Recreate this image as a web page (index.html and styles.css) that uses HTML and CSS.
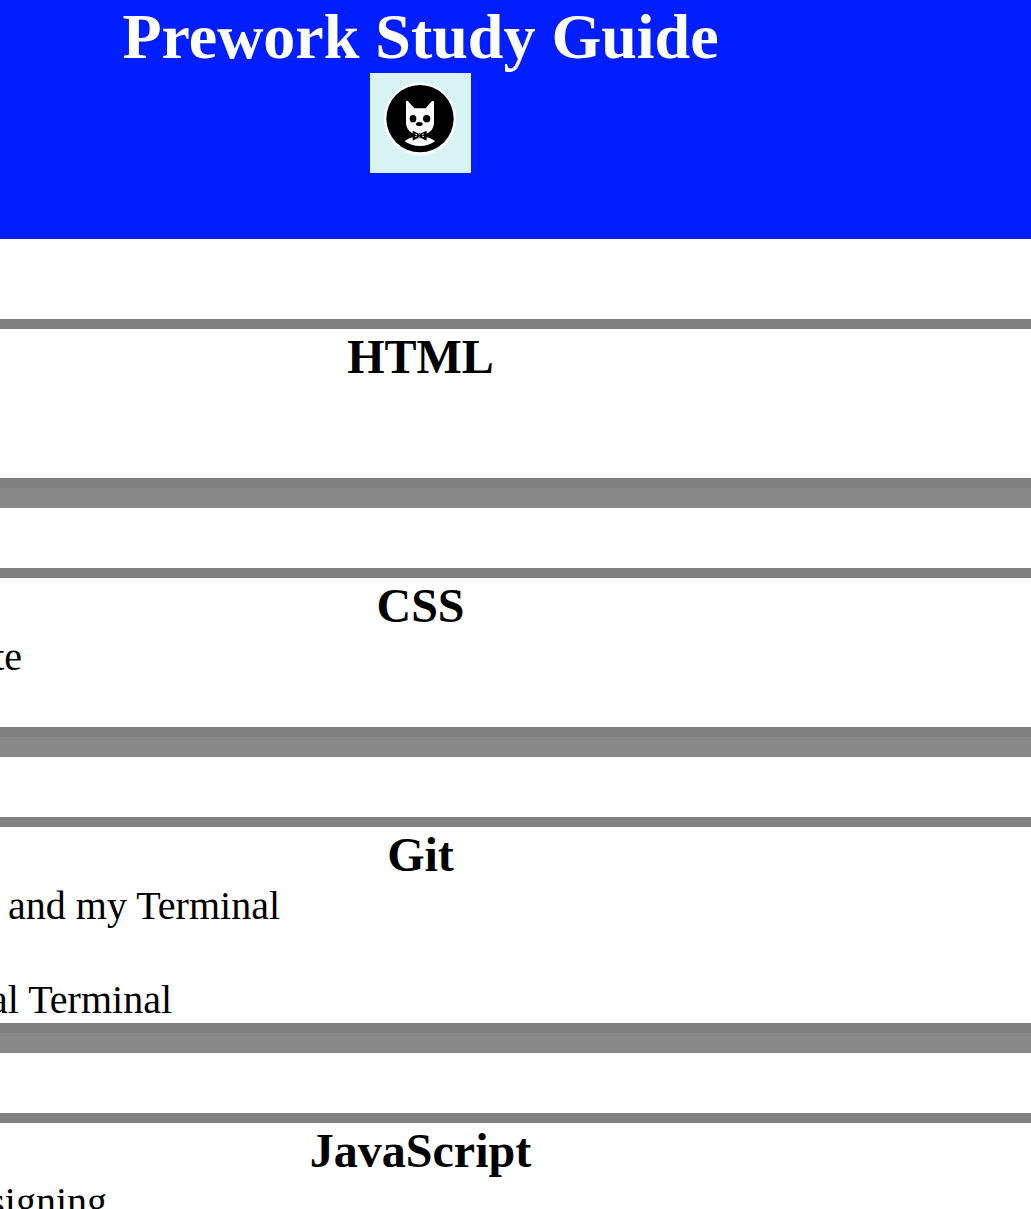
FILE: index.html
```html
<!DOCTYPE html>
<html lang="en">
<head>
  <meta charset="utf-8">
  <title>Prework Study Guide</title>
  <link rel="stylesheet" href="styles.css">
</head>
<body>
  <header class="header">
    <h1 class="title">Prework Study Guide</h1>
    <svg class="logo" viewBox="30 24 303 300" role="img" aria-label="Cat wearing a bow tie">
      <rect x="30" y="24" width="303" height="300" fill="#d7f3f3"/>
      <ellipse cx="180" cy="163" rx="109" ry="111" fill="#e8fbfa"/>
      <circle cx="180" cy="161" r="107" fill="#fff"/>
      <circle cx="180" cy="161" r="101" fill="#000"/>
      <path d="M138 108 Q142 106 146 111 L163 130 H197 L213 111 Q219 106 222 110 V174 Q221 195 203 205 L178 208 L157 205 Q139 195 138 174 Z" fill="#fff"/>
      <path d="M134 229 Q145 218 164 216 H195 Q214 218 225 229 Q206 243 180 243 Q153 243 134 229 Z" fill="#fff"/>
      <ellipse cx="159" cy="161" rx="10" ry="11" fill="#000"/>
      <ellipse cx="200" cy="161" rx="11" ry="11" fill="#000"/>
      <ellipse cx="178" cy="177" rx="10" ry="6" fill="#000"/>
      <path d="M158 197 L172 204 H185 L200 197 V227 L185 220 H172 L158 227 Z" fill="#000"/>
      <path d="M165 207 L171 209 M165 215 L171 213 M192 207 L186 209 M192 215 L186 213 M174 205 L178 208 L182 205 M174 219 L178 216 L182 219" stroke="#fff" stroke-width="2.5" fill="none"/>
    </svg>
  </header>
  <main>
    <section class="card">
      <h2 class="heading">HTML</h2>
      <ul class="notes">
        <li class="note"></li>
        <li class="note"></li>
      </ul>
    </section>
    <section class="card">
      <h2 class="heading">CSS</h2>
      <ul class="notes">
        <li class="note note-css">te</li>
        <li class="note"></li>
      </ul>
    </section>
    <section class="card">
      <h2 class="heading">Git</h2>
      <ul class="notes">
        <li class="note note-branch">and my Terminal</li>
        <li class="note"></li>
        <li class="note note-terminal">al Terminal</li>
      </ul>
    </section>
    <section class="card">
      <h2 class="heading">JavaScript</h2>
      <ul class="notes">
        <li class="note note-js">signing</li>
      </ul>
    </section>
  </main>
</body>
</html>
```
FILE: styles.css
```css
* {
  box-sizing: border-box;
  margin: 0;
  padding: 0;
}

html {
  height: 100%;
  overflow: hidden;
}

body {
  height: 100%;
  overflow: hidden;
  background: #fff;
  color: #000;
  font-family: "Liberation Serif", "Times New Roman", serif;
}

.header {
  display: flex;
  flex-direction: column;
  align-items: center;
  padding-right: 190px;
  padding-bottom: 66px;
  margin-bottom: 80px;
  background: #001eff;
  color: #fff;
}

.title {
  font-size: 64px;
  line-height: 73px;
}

.logo {
  display: block;
  width: 101px;
  height: 100px;
}

.card {
  border-top: 10px solid #808080;
  border-bottom: 10px solid #808080;
  box-shadow: 0 20px 0 #888;
  margin-bottom: 80px;
}

.heading {
  padding-right: 190px;
  font-size: 48px;
  line-height: 55px;
  text-align: center;
}

.notes {
  list-style: none;
}

.note {
  display: flex;
  justify-content: flex-end;
  height: 47px;
  font-size: 40px;
  line-height: 47px;
  white-space: nowrap;
}

.note-css {
  width: 22px;
}

.note-branch {
  width: 280px;
}

.note-terminal {
  width: 172px;
}

.note-js {
  width: 107px;
}
```
